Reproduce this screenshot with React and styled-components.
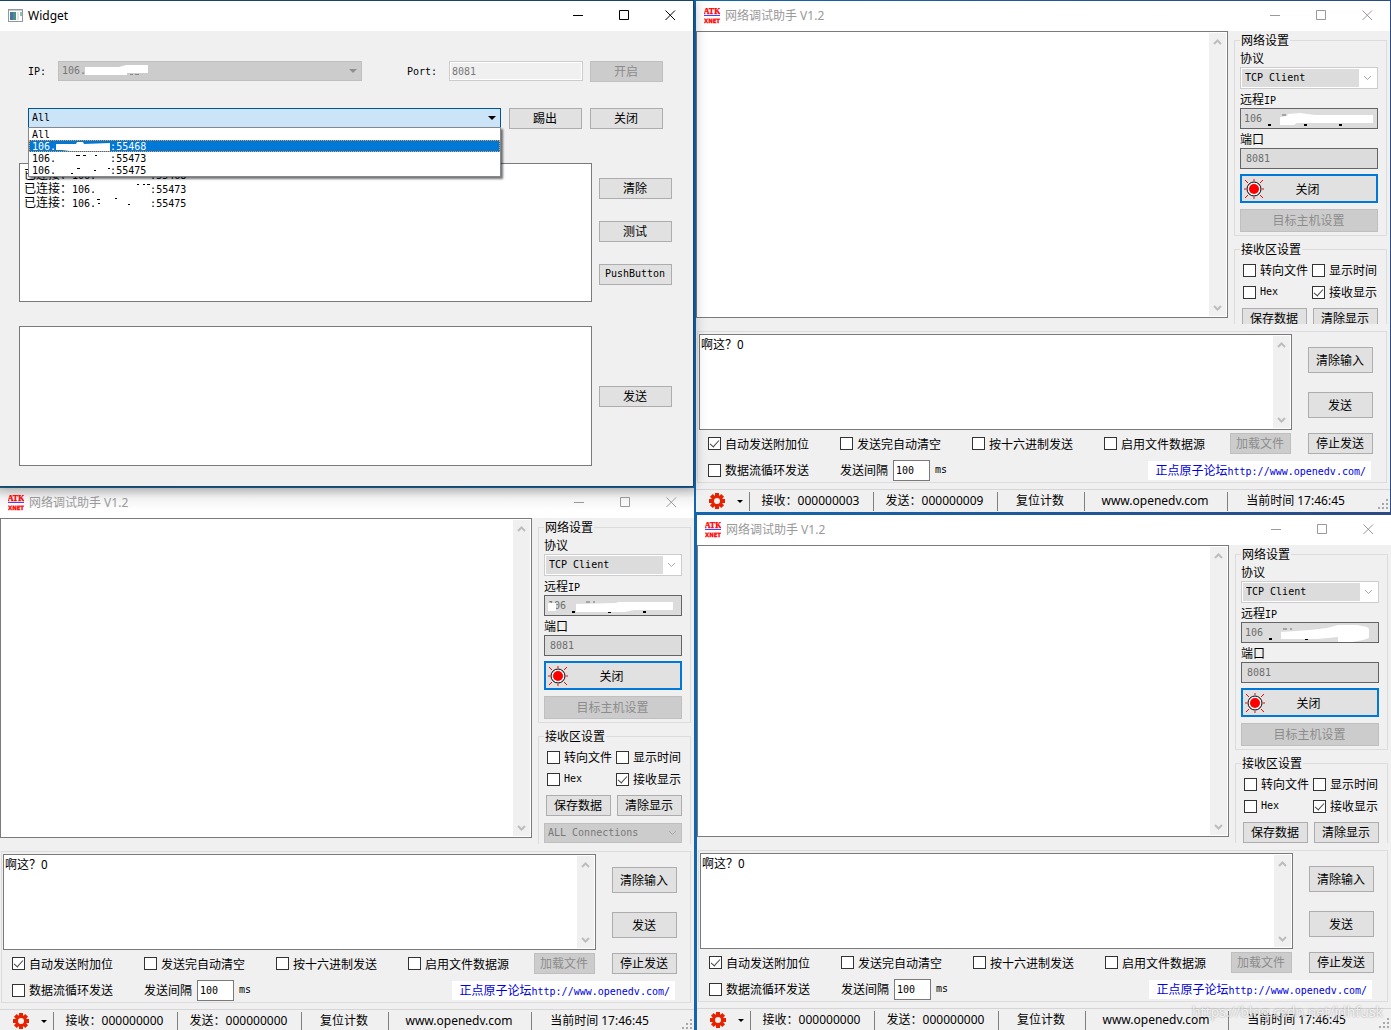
import React, { useId, useState } from 'react';
import styled, { createGlobalStyle, css } from 'styled-components';

const cjk = '"Noto Sans CJK SC", sans-serif';
const mono = '"DejaVu Sans Mono", "Noto Sans CJK SC", monospace';
const ui = '"Noto Sans", "Noto Sans CJK SC", sans-serif';

// Blots painted over the address in each client window
const coverUps = {
  top: 'M39 8L46 7L47 5L59 4L74 6L132 6V14H56L53 16H39Z',
  left: 'M3 7H11V15H3Z M31 8L71 7L73 6H128V14H89L80 16H31Z',
  bottom: 'M39 9L68 7L85 5L96 2H115L125 4L127 6V15L121 17L110 19H96V14L75 16H39Z',
};

const App = () => (
  <>
    <GlobalStyle />
    <Desktop>
      <Column $overhang={2} $gap={1}>
        <ServerWindow />
        <ClientWindow cover="left" received="000000000" sent="000000000" grow />
      </Column>
      <Column $overhang={1} $gap={3}>
        <ClientWindow cover="top" received="000000003" sent="000000009" />
        <ClientWindow cover="bottom" received="000000000" sent="000000000" grow inset />
      </Column>
      <Watermark>https://blog.csdn.net/jdhfusk</Watermark>
    </Desktop>
  </>
);

const Caption = ({ inactive }) => (
  <CaptionButtons $inactive={inactive}>
    <button type="button" aria-label="Minimize">
      <svg width="11" height="11"><path d="M0 5.5H10" /></svg>
    </button>
    <button type="button" aria-label="Maximize">
      <svg width="11" height="11"><path d="M.5 .5H9.5V9.5H.5Z" /></svg>
    </button>
    <button type="button" aria-label="Close">
      <svg width="11" height="11"><path d="M.5 .5L10 10M10 .5L.5 10" /></svg>
    </button>
  </CaptionButtons>
);

const Check = ({ label, checked = false, latin }) => {
  const [on, setOn] = useState(checked);
  return (
    <CheckLabel>
      <input type="checkbox" checked={on} onChange={(e) => setOn(e.target.checked)} />
      {latin ? <Latin>{label}</Latin> : label}
    </CheckLabel>
  );
};

const Chevron = ({ up, thin }) => (
  <svg width="9" height="6" aria-hidden="true">
    <path
      d={up ? 'M1 5L4.5 1.5L8 5' : 'M1 1L4.5 4.5L8 1'}
      fill="none"
      stroke={thin ? '#a8a8a8' : '#bdbdbd'}
      strokeWidth={thin ? 1 : 2}
    />
  </svg>
);

const TextPane = ({ label, text, className }) => (
  <Pane className={className}>
    <textarea aria-label={label} defaultValue={text} spellCheck="false" />
    <Scrollbar>
      <Chevron up />
      <Chevron />
    </Scrollbar>
  </Pane>
);

const SunIcon = () => (
  <svg width="20" height="20" viewBox="0 0 20 20" aria-hidden="true">
    <path
      d="M10 0V2M10 18V20M0 10H2M18 10H20M1 1L4 4M16 4L19 1M1 19L4 16M16 16L19 19"
      stroke="#f00"
      strokeWidth="1"
    />
    <circle cx="10" cy="10" r="7" fill="#f4f4f4" stroke="#000" />
    <circle cx="10" cy="10" r="5" fill="#f00" />
  </svg>
);

const GearIcon = () => (
  <svg width="18" height="18" viewBox="-9 -9 18 18" aria-hidden="true">
    <g fill="#e62200">
      {[0, 45, 90, 135].map((a) => (
        <path key={a} d="M-2 -8H2L2 8H-2Z" transform={`rotate(${a})`} />
      ))}
      <circle r="6" />
    </g>
    <circle r="3" fill="#f0f0f0" />
  </svg>
);

const LogoIcon = () => (
  <svg width="16" height="16" viewBox="0 0 16 16" aria-hidden="true">
    <g fill="#f00" stroke="#f00" strokeWidth=".3" fontFamily="Liberation Serif" fontWeight="bold" textAnchor="middle">
      <text x="8" y="6" fontSize="8">ATK</text>
      <text x="8" y="15" fontSize="6" fontFamily="DejaVu Sans Condensed">XNET</text>
    </g>
    <path d="M0 7.5H16" stroke="#44f" />
  </svg>
);

const WidgetIcon = () => (
  <svg width="15" height="14" viewBox="0 0 15 14" aria-hidden="true">
    <rect x=".5" y=".5" width="14" height="12" fill="#fff" stroke="#8e999f" />
    <path d="M1 1.5H14" stroke="#c6ced3" />
    <rect x="2" y="3" width="6" height="8" fill="#4a8f8a" />
    <rect x="2" y="3" width="3" height="8" fill="#4673a0" />
    <rect x="9" y="3" width="2" height="8" fill="#e3e3e3" />
    <rect x="12" y="3" width="2" height="4" fill="#8fc0a8" />
  </svg>
);

// Leftover specks of the blotted-out part of an address
const Specks = ({ d, blot }) => (
  <svg width="54" height="12" aria-hidden="true">
    {blot && <path d={blot} fill="#fff" />}
    {d && <path d={d} stroke="#000" fill="none" />}
  </svg>
);

const peers = [
  { port: '55468', blot: 'M-4 3L20 3L21 1H27L28 3L54 2V10H14L6 9H-4Z', selected: true },
  { port: '55473', d: 'M20 2.5H24M27 2.5H30M39 2.5H41' },
  { port: '55475', d: 'M15 8.5H17M21 3.5H24M38 5.5H40M52 3.5H54' },
];

const ServerWindow = () => (
  <ServerFrame>
    <TitleBar>
      <WidgetIcon />
      <span>Widget</span>
      <Caption />
    </TitleBar>
    <ServerBody>
      <AddressRow>
        <label htmlFor="server-ip">IP:</label>
        <Combo $disabled>
          <select id="server-ip" disabled><option>106.</option></select>
          <Triangle viewBox="0 0 8 4"><path d="M0 0H8L4 4Z" fill="#8f8f8f" /></Triangle>
          <Cover width="100" height="18" aria-hidden="true">
            <path d="M26 5H60L67 3H89V11H68V13H26Z" fill="#fff" />
            <path d="M71 12.5H74M76 12.5H80" stroke="#8a8a8a" />
          </Cover>
        </Combo>
        <label htmlFor="server-port">Port:</label>
        <PortInput id="server-port" defaultValue="8081" disabled />
        <Button disabled>开启</Button>
      </AddressRow>
      <PeerRow>
        <Combo $open>
          <select aria-label="Clients"><option>All</option></select>
          <Triangle viewBox="0 0 8 4"><path d="M0 0H8L4 4Z" fill="#000" /></Triangle>
          <Popup role="listbox" aria-label="Clients">
            <li role="option" aria-selected="false">All</li>
            {peers.map((p) => (
              <li key={p.port} role="option" aria-selected={Boolean(p.selected)}>
                106.<Specks d={p.d} blot={p.blot} />:{p.port}
              </li>
            ))}
          </Popup>
        </Combo>
        <Button>踢出</Button>
        <Button>关闭</Button>
      </PeerRow>
      <LogRow>
        <Log role="log">
          <p>已连接：<Latin>106.<Specks />:55468</Latin></p>
          <p>已连接：<Latin>106.<Specks d="M41 3.5H43M47 3.5H49M51 3.5H54" />:55473</Latin></p>
          <p>已连接：<Latin>106.<Specks d="M1 4.5H4M2 8.5H4M19 3.5H21M32 9.5H34" />:55475</Latin></p>
        </Log>
        <ButtonStack>
          <Button>清除</Button>
          <Button>测试</Button>
          <Button $latin>PushButton</Button>
        </ButtonStack>
      </LogRow>
      <SendRow>
        <SendBox aria-label="Message" />
        <Button>发送</Button>
      </SendRow>
    </ServerBody>
  </ServerFrame>
);

const ClientWindow = ({ cover, received, sent, grow, inset }) => {
  const id = useId();
  return (
    <ClientFrame $grow={grow} $inset={inset}>
      <TitleBar $inactive $shaded={grow && !inset}>
        <LogoIcon />
        <span>网络调试助手 V1.2</span>
        <Caption inactive />
      </TitleBar>
      <Upper>
        <ReceivePane label="接收区" />
        <Sidebar>
          <Group>
            <legend>网络设置</legend>
            <label htmlFor={`${id}-proto`}>协议</label>
            <Combo $framed>
              <select id={`${id}-proto`} disabled><option>TCP Client</option></select>
              <ComboEnd><Chevron thin /></ComboEnd>
            </Combo>
            <label htmlFor={`${id}-ip`}>远程<Latin>IP</Latin></label>
            <AddressField>
              <input id={`${id}-ip`} defaultValue="106" disabled />
              <Cover width="136" height="20" aria-hidden="true">
                <path d="M27 15H30V17H27ZM63 15H66V17H63ZM98 15H101V17H98Z" />
                <path d="M41 6H45M48 6H50" stroke="#6d6d6d" />
                <path d={coverUps[cover]} fill="#fff" />
              </Cover>
            </AddressField>
            <label htmlFor={`${id}-port`}>端口</label>
            <AddressField $indent>
              <input id={`${id}-port`} defaultValue="8081" disabled />
            </AddressField>
            <ConnectButton type="button"><SunIcon /><span>关闭</span></ConnectButton>
            <HostButton disabled>目标主机设置</HostButton>
          </Group>
          <Group $second>
            <legend>接收区设置</legend>
            <CheckGrid>
              <Check label="转向文件" />
              <Check label="显示时间" />
              <Check label="Hex" latin />
              <Check label="接收显示" checked />
            </CheckGrid>
            <ButtonPair>
              <Button>保存数据</Button>
              <Button>清除显示</Button>
            </ButtonPair>
            <Combo $disabled $spaced>
              <select aria-label="Connection" disabled><option>ALL Connections</option></select>
              <ComboEnd><Chevron thin /></ComboEnd>
            </Combo>
          </Group>
        </Sidebar>
      </Upper>
      <Sender>
        <TextPane label="发送内容" text="啊这？0" />
        <SendButtons>
          <Button>清除输入</Button>
          <Button>发送</Button>
        </SendButtons>
        <Options>
          <Check label="自动发送附加位" checked />
          <Check label="发送完自动清空" />
          <Check label="按十六进制发送" />
          <Check label="启用文件数据源" />
          <Button disabled>加载文件</Button>
        </Options>
        <StopButton>停止发送</StopButton>
        <Interval>
          <Check label="数据流循环发送" />
          <label htmlFor={`${id}-gap`}>发送间隔</label>
          <input id={`${id}-gap`} defaultValue="100" />
          <Latin>ms</Latin>
          <a href="http://www.openedv.com/">正点原子论坛<Latin>http://www.openedv.com/</Latin></a>
        </Interval>
      </Sender>
      <StatusBar>
        <GearCell type="button" aria-label="Settings">
          <GearIcon />
          <svg width="6" height="3"><path d="M0 0H6L3 3Z" /></svg>
        </GearCell>
        <Cell $width={124}>接收：{received}</Cell>
        <Cell $width={124}>发送：{sent}</Cell>
        <Cell $width={87}>复位计数</Cell>
        <Cell $width={143}>www.openedv.com</Cell>
        <Cell $width={138}>当前时间 17:46:45</Cell>
        <Grip width="11" height="11" aria-hidden="true">
          <path d="M8 0h2v2h-2zM4 4h2v2h-2zM8 4h2v2h-2zM0 8h2v2h-2zM4 8h2v2h-2zM8 8h2v2h-2z" fill="#a8a8a8" />
        </Grip>
      </StatusBar>
    </ClientFrame>
  );
};

// Styled Components
const GlobalStyle = createGlobalStyle`
  * {
    box-sizing: border-box;
  }

  body {
    margin: 0;
    font-family: ${cjk};
    font-size: 12px;
    line-height: 16px;
    color: #000;
  }

  button, input, select, textarea {
    margin: 0;
    font: inherit;
    color: inherit;
    border-radius: 0;
    outline: none;
  }

  svg {
    flex: none;
  }
`;

const Desktop = styled.div`
  position: relative;
  display: grid;
  grid-template-columns: minmax(0, 1fr) minmax(0, 1fr);
  grid-template-rows: minmax(0, 1fr);
  gap: 1px;
  height: 100vh;
  overflow: hidden;
  background: linear-gradient(90deg, #1a6488, #1266ae 50%, #2b4a86);
`;

const Column = styled.div`
  display: flex;
  flex-direction: column;
  gap: ${(p) => p.$gap}px;
  height: calc(100% + ${(p) => p.$overhang}px);
`;

const Latin = styled.span`
  font-family: ${mono};
  font-size: 10px;
  white-space: pre;
`;

const TitleBar = styled.header`
  display: flex;
  align-items: center;
  gap: 5px;
  height: 30px;
  padding-left: 8px;
  flex: none;
  background: ${(p) => (p.$shaded ? 'linear-gradient(#d4d4d4, #f2f2f2 10px, #fff 22px)' : '#fff')};
  font-family: ${ui};
  color: ${(p) => (p.$inactive ? '#999' : '#000')};
`;

const CaptionButtons = styled.div`
  display: flex;
  align-self: flex-start;
  margin-left: auto;

  button {
    display: flex;
    align-items: center;
    justify-content: center;
    width: 46px;
    height: 29px;
    padding: 0;
    border: none;
    background: none;
  }

  path {
    fill: none;
    stroke: ${(p) => (p.$inactive ? '#999' : '#000')};
  }
`;

const Button = styled.button.attrs({ type: 'button' })`
  display: flex;
  align-items: center;
  justify-content: center;
  flex: none;
  width: 73px;
  height: 21px;
  padding: 0 1px 1px 0;
  border: 1px solid #adadad;
  background: #e1e1e1;
  white-space: nowrap;

  ${(p) => p.$latin && css`
    font-family: ${mono};
    font-size: 10px;
  `}

  &:disabled {
    border-color: #bfbfbf;
    background: #ccc;
    color: #8c8c8c;
  }
`;

const Combo = styled.div`
  position: relative;
  display: flex;
  height: ${(p) => (p.$framed ? 22 : 20)}px;
  margin-top: ${(p) => (p.$spaced ? 7 : 0)}px;
  border: 1px solid ${(p) => (p.$open ? '#005499' : p.$disabled ? '#bfbfbf' : '#ccc')};
  background: ${(p) => (p.$open ? '#cce4f7' : p.$disabled ? '#ccc' : '#fff')};

  select {
    appearance: none;
    flex: 1;
    min-width: 0;
    padding: 0 3px;
    border: none;
    background: transparent;
    font-family: ${mono};
    font-size: 10px;
    opacity: 1;
    color: ${(p) => (p.$disabled ? '#787878' : '#000')};
  }

  ${(p) => p.$framed && css`
    padding: 1px;

    select {
      background: #dcdcdc;
    }
  `}
`;

const ComboEnd = styled.span`
  display: flex;
  align-items: center;
  justify-content: center;
  width: 17px;
`;

const Triangle = styled.svg`
  position: absolute;
  right: 4px;
  top: 7px;
  width: 8px;
  height: 4px;
`;

const Cover = styled.svg`
  position: absolute;
  left: 0;
  top: 0;
  pointer-events: none;
`;

const Popup = styled.ul`
  position: absolute;
  z-index: 2;
  top: 18px;
  left: -1px;
  right: -1px;
  margin: 0;
  padding: 0;
  border: 1px solid #828790;
  background: #fff;
  box-shadow: 2px 2px 2px rgba(0, 0, 0, 0.55);
  list-style: none;
  font-family: ${mono};
  font-size: 10px;

  li {
    display: flex;
    align-items: center;
    height: 12px;
    padding: 1px 0 0 3px;
    line-height: 12px;
  }

  li[aria-selected='true'] {
    background: #0078d7;
    color: #fff;
    outline: 1px dotted #ff9a3c;
    outline-offset: -1px;
  }
`;

const ServerFrame = styled.section`
  position: relative;
  z-index: 1;
  flex: none;
  margin-right: 1px;
  border: 1px solid #1a4567;
  border-left: none;
  background: #f0f0f0;
  box-shadow: 0 0 12px rgba(0, 0, 0, 0.3);
`;

const ServerBody = styled.div`
  padding: 30px 21px 20px 19px;
`;

const AddressRow = styled.div`
  display: flex;
  align-items: flex-start;
  padding: 0 9px;

  label {
    width: 30px;
    line-height: 21px;
    font-family: ${mono};
    font-size: 10px;
  }

  label + input {
    margin-right: 7px;
  }

  ${Combo} {
    flex: 1;
    margin-right: 45px;
  }

  ${Combo} + label {
    width: 42px;
  }
`;

const PortInput = styled.input`
  width: 134px;
  height: 20px;
  padding: 0 2px;
  border: 1px solid #ccc;
  background: #f0f0f0;
  box-shadow: inset 0 0 0 1px #fff;

  &:disabled {
    font-family: ${mono};
    font-size: 10px;
    color: #787878;
  }
`;

const PeerRow = styled.div`
  display: flex;
  gap: 8px;
  margin-top: 26px;
  padding: 0 9px;

  ${Combo} {
    flex: 1;
  }
`;

const LogRow = styled.div`
  display: flex;
  gap: 7px;
  margin-top: 34px;
`;

const Log = styled.div`
  flex: 1;
  height: 139px;
  padding: 3px 4px;
  border: 1px solid #7a7a7a;
  background: #fff;
  overflow: hidden;

  p {
    display: flex;
    height: 14px;
    margin: 0;
    line-height: 14px;
  }
`;

const ButtonStack = styled.div`
  display: flex;
  flex-direction: column;
  gap: 22px;
  padding-top: 15px;
`;

const SendRow = styled.div`
  display: flex;
  align-items: center;
  gap: 7px;
  margin-top: 24px;
`;

const SendBox = styled.textarea`
  flex: 1;
  height: 140px;
  border: 1px solid #7a7a7a;
  background: #fff;
  resize: none;
`;

const ClientFrame = styled.section`
  display: flex;
  flex-direction: column;
  flex: ${(p) => (p.$grow ? '1' : '0 0 511px')};
  min-height: 0;
  margin: ${(p) => (p.$inset ? '0 0 0 1px' : p.$grow ? '0 1px 0 0' : '1px 1px 0 0')};
  background: #f0f0f0;
`;

const Upper = styled.div`
  display: flex;
  flex: 1;
  min-height: 0;
  padding-bottom: 6px;
`;

const Pane = styled.div`
  display: flex;
  height: 96px;
  padding: 1px;
  border: 1px solid #7a7a7a;
  background: #fff;

  textarea {
    flex: 1;
    min-width: 0;
    padding: 0;
    border: none;
    background: none;
    line-height: 15px;
    resize: none;
    overflow: hidden;
  }
`;

const ReceivePane = styled(TextPane)`
  flex: 1;
  height: auto;
  margin-bottom: 6px;
`;

const Scrollbar = styled.div`
  display: flex;
  flex-direction: column;
  align-items: center;
  justify-content: space-between;
  width: 17px;
  padding: 6px 0 5px;
  background: #f0f0f0;
`;

const Sidebar = styled.aside`
  flex: none;
  width: 162px;
  padding: 2px 3px 0 6px;
  overflow: hidden;
`;

const Group = styled.fieldset`
  min-width: 0;
  margin: ${(p) => (p.$second ? '6px' : 0)} 0 0;
  padding: 0 8px 3px 5px;
  border: 1px solid #dcdcdc;

  legend {
    height: 15px;
    padding: 0 1px;
    line-height: 13px;
  }

  > label {
    display: block;
    height: 16px;
    margin: 2px 0 1px;
  }
`;

const AddressField = styled.div`
  position: relative;
  display: flex;
  height: 21px;
  border: 1px solid #646464;
  background: #dcdcdc;

  input {
    flex: 1;
    min-width: 0;
    padding: 0 ${(p) => (p.$indent ? 5 : 3)}px;
    border: none;
    background: none;
    font-family: ${mono};
    font-size: 10px;
    color: #6d6d6d;
  }
`;

const ConnectButton = styled.button`
  display: flex;
  align-items: center;
  width: 100%;
  height: 29px;
  margin-top: 5px;
  padding: 0 2px;
  border: 2px solid #0078d7;
  background: #e1e1e1;

  span {
    flex: 1;
    padding-right: 23px;
    text-align: center;
  }
`;

const HostButton = styled(Button)`
  width: 100%;
  height: 23px;
  margin-top: 6px;
`;

const CheckLabel = styled.label`
  display: flex;
  align-items: center;
  gap: 4px;
  white-space: nowrap;

  input {
    appearance: none;
    position: relative;
    flex: none;
    width: 13px;
    height: 13px;
    border: 1px solid #333;
    background: #fff;
  }

  input:checked::after {
    content: '';
    position: absolute;
    left: 3px;
    top: 0;
    width: 4px;
    height: 8px;
    border: solid #444;
    border-width: 0 1px 1px 0;
    transform: rotate(42deg);
  }
`;

const CheckGrid = styled.div`
  display: grid;
  grid-template-columns: 69px 66px;
  grid-auto-rows: 22px;
  padding: 2px 0 0 3px;
`;

const ButtonPair = styled.div`
  display: flex;
  justify-content: space-between;
  margin-top: 5px;
  padding-left: 2px;

  button {
    width: 65px;
  }
`;

const Sender = styled.div`
  display: grid;
  grid-template-columns: minmax(0, 1fr) 65px;
  grid-template-rows: 96px 27px 25px;
  column-gap: 16px;
  flex: none;
  margin: 1px 3px 6px 1px;
  padding: 2px 13px 0 1px;
  border: 1px solid #dcdcdc;
`;

const SendButtons = styled.div`
  display: flex;
  flex-direction: column;
  gap: 19px;
  padding-top: 13px;

  button {
    width: 65px;
    height: 26px;
  }
`;

const Options = styled.div`
  display: grid;
  grid-template-columns: repeat(3, 132px) minmax(0, 1fr) 61px;
  align-items: center;
  padding: 0 1px 0 9px;

  button {
    width: 61px;
  }
`;

const StopButton = styled(Button)`
  align-self: center;
  width: 65px;
`;

const Interval = styled.div`
  display: flex;
  align-items: center;
  grid-column: 1 / -1;
  gap: 5px;
  padding: 1px 0 0 9px;

  ${CheckLabel} {
    width: 127px;
  }

  > input {
    width: 37px;
    height: 21px;
    padding: 0 2px;
    border: 1px solid #7a7a7a;
    background: #fff;
    font-family: ${mono};
    font-size: 10px;
  }

  a {
    margin: 0 2px 0 auto;
    padding: 0 5px 0 8px;
    background: #fff;
    color: #00d;
    line-height: 17px;
    text-decoration: none;
    white-space: nowrap;
  }
`;

const StatusBar = styled.footer`
  display: flex;
  align-items: center;
  flex: none;
  height: 23px;
  border-top: 1px solid #d5d5d5;
  font-family: ${ui};
`;

const GearCell = styled.button`
  display: flex;
  align-items: center;
  justify-content: flex-end;
  gap: 11px;
  width: 53px;
  padding: 0 6px 0 0;
  border: none;
  background: none;
`;

const Cell = styled.span`
  width: ${(p) => p.$width}px;
  height: 19px;
  padding-right: 2px;
  border-left: 1px solid #808080;
  line-height: 18px;
  text-align: center;
  white-space: nowrap;

  &:last-of-type {
    flex: 1 0 auto;
    max-width: 138px;
  }
`;

const Grip = styled.svg`
  align-self: flex-end;
  margin: 0 1px 2px auto;
`;

const Watermark = styled.span`
  position: absolute;
  z-index: 3;
  right: 8px;
  bottom: 7px;
  font-family: ${ui};
  font-size: 14px;
  line-height: 22px;
  color: rgba(255, 255, 255, 0.8);
  text-shadow: 0 0 2px rgba(0, 0, 0, 0.4);
  pointer-events: none;
`;

export default App;
